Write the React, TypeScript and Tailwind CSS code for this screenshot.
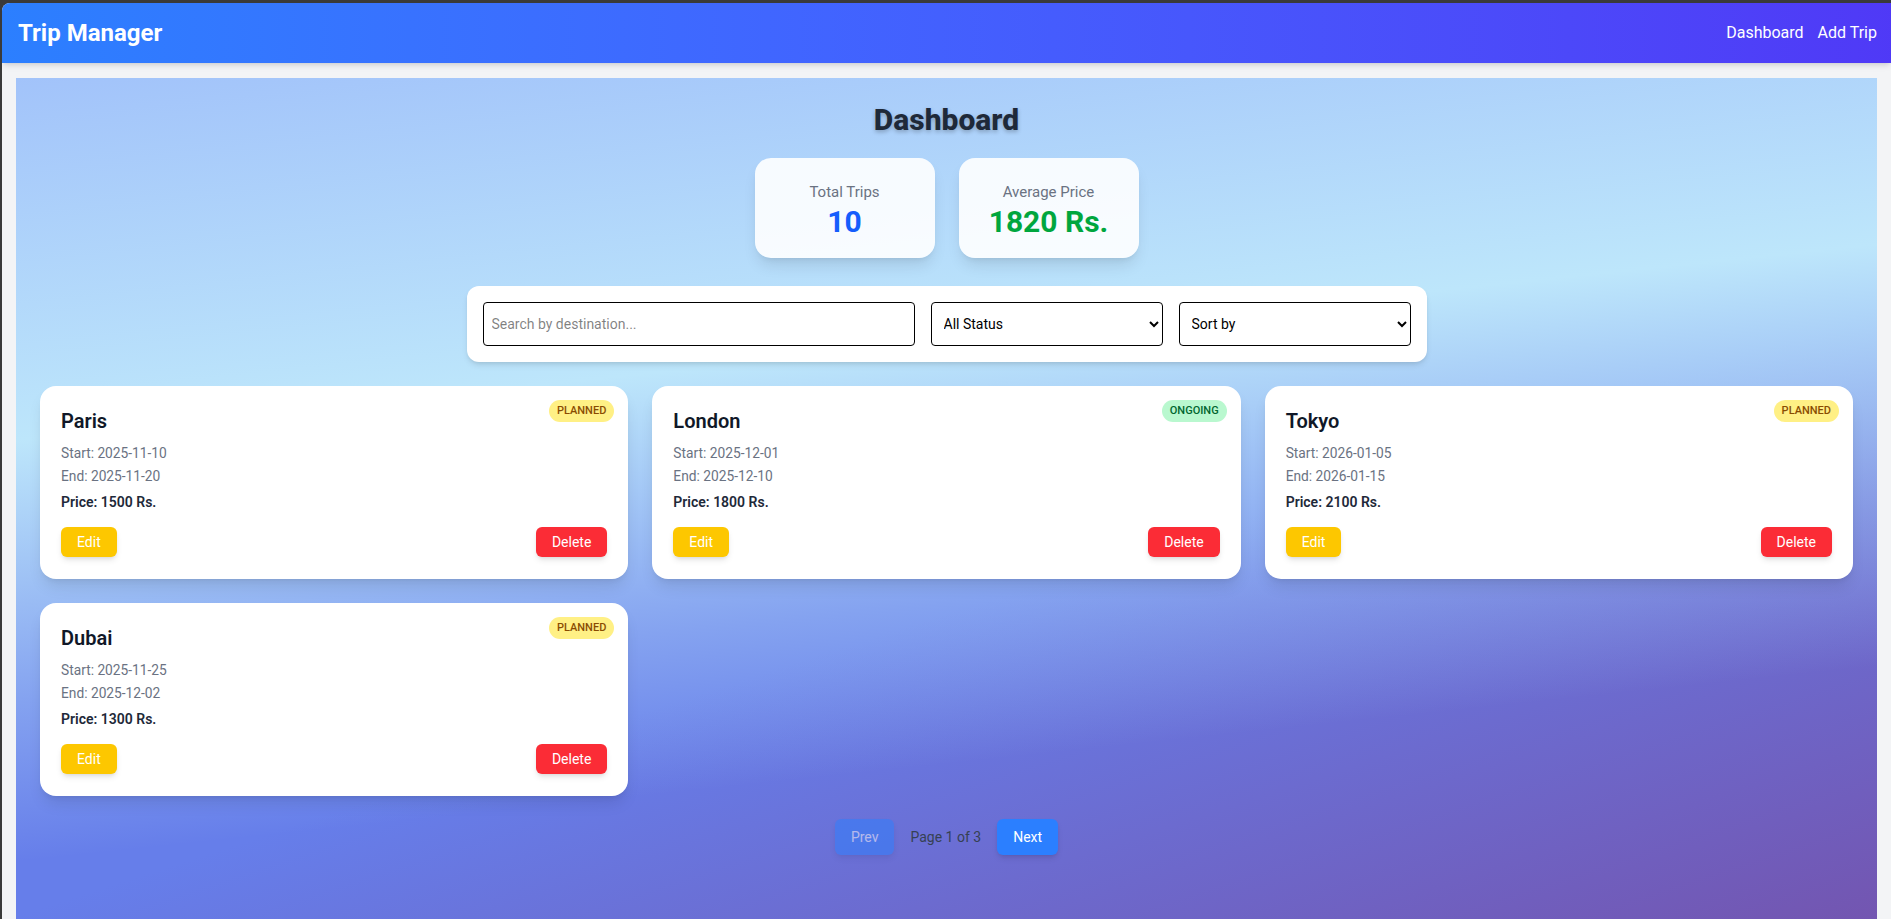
import { useState } from 'react';

type Trip = {
  id: number;
  destination: string;
  start: string;
  end: string;
  price: number;
  status: 'PLANNED' | 'ONGOING';
};

const trips: Trip[] = [
  { id: 1, destination: 'Paris', start: '2025-11-10', end: '2025-11-20', price: 1500, status: 'PLANNED' },
  { id: 2, destination: 'London', start: '2025-12-01', end: '2025-12-10', price: 1800, status: 'ONGOING' },
  { id: 3, destination: 'Tokyo', start: '2026-01-05', end: '2026-01-15', price: 2100, status: 'PLANNED' },
  { id: 4, destination: 'Dubai', start: '2025-11-25', end: '2025-12-02', price: 1300, status: 'PLANNED' },
];

function StatusBadge({ status }: { status: Trip['status'] }) {
  const color = status === 'ONGOING' ? 'bg-green-200 text-green-800' : 'bg-yellow-200 text-yellow-800';
  return (
    <span
      className={`absolute top-[14px] right-[14px] rounded-full px-2 py-[3px] text-[11px] leading-4 font-medium ${color}`}
    >
      {status}
    </span>
  );
}

function TripCard({ trip }: { trip: Trip }) {
  return (
    <div className="relative rounded-2xl bg-white px-[21px] pt-[21px] pb-[22px] shadow-lg">
      <StatusBadge status={trip.status} />
      <h3 className="text-xl leading-7 font-semibold text-gray-900">{trip.destination}</h3>
      <div className="mt-[7px] text-[13.75px] leading-[23px] text-gray-500">
        <p>Start: {trip.start}</p>
        <p>End: {trip.end}</p>
      </div>
      <p className="mt-[4px] text-sm leading-5 font-semibold text-gray-800">Price: {trip.price} Rs.</p>
      <div className="mt-[15px] flex items-center justify-between">
        <button className="rounded-md bg-yellow-400 px-4 py-[5px] text-sm text-white shadow-md">Edit</button>
        <button className="rounded-md bg-red-500 px-4 py-[5px] text-sm text-white shadow-md">Delete</button>
      </div>
    </div>
  );
}

export default function App() {
  const [search, setSearch] = useState('');

  return (
    <div className="min-h-screen bg-[#3a3a3a] pt-[3px] pl-[2px] font-['Roboto',sans-serif]">
      <div className="min-h-screen overflow-hidden rounded-tl-lg bg-gray-100">
        <nav className="relative z-10 flex h-[60px] items-center justify-between bg-linear-to-r from-blue-500 to-indigo-600 pr-[14px] pl-4 text-white shadow-md">
          <h1 className="text-2xl font-bold">Trip Manager</h1>
          <div className="flex gap-3.5 text-base">
            <a href="#">Dashboard</a>
            <a href="#">Add Trip</a>
          </div>
        </nav>

        <main className="px-3.5 pt-[15px]">
          <div className="min-h-screen bg-[linear-gradient(174deg,#a2c3fa_0px,#bde6fb_360px,rgba(189,230,251,0.35)_620px,rgba(189,230,251,0)_780px),linear-gradient(162deg,#667eea_55%,#764ba2_105%)] px-6 pt-6 pb-10">
            <h2 className="text-center text-3xl font-extrabold text-gray-800 [text-shadow:0_2px_4px_rgba(0,0,0,0.25)]">
              Dashboard
            </h2>

            <div className="mt-5 flex justify-center gap-6">
              <div className="w-[180px] rounded-2xl bg-white/90 px-5 pt-[22px] pb-[18px] text-center shadow-lg">
                <p className="text-[15px] leading-6 text-gray-500">Total Trips</p>
                <p className="text-3xl leading-9 font-bold text-blue-600">10</p>
              </div>
              <div className="w-[180px] rounded-2xl bg-white/90 px-5 pt-[22px] pb-[18px] text-center shadow-lg">
                <p className="text-[15px] leading-6 text-gray-500">Average Price</p>
                <p className="text-3xl leading-9 font-bold text-green-600">1820 Rs.</p>
              </div>
            </div>

            <div className="mx-auto mt-[28px] flex w-[960px] gap-4 rounded-xl bg-white p-4 shadow-md">
              <input
                value={search}
                onChange={(e) => setSearch(e.target.value)}
                placeholder="Search by destination..."
                className="h-11 flex-1 rounded border border-black px-2 text-sm"
              />
              <select className="h-11 w-[232px] rounded border border-black px-2 text-sm">
                <option>All Status</option>
                <option>Planned</option>
                <option>Ongoing</option>
                <option>Completed</option>
              </select>
              <select className="h-11 w-[232px] rounded border border-black px-2 text-sm">
                <option>Sort by</option>
                <option>Price</option>
                <option>Start date</option>
              </select>
            </div>

            <div className="mt-6 grid grid-cols-3 gap-6">
              {trips.map((t) => (
                <TripCard key={t.id} trip={t} />
              ))}
            </div>

            <div className="mt-[23px] flex items-center justify-center gap-4">
              <button disabled className="rounded-md bg-blue-500 px-4 py-2 text-sm text-white opacity-50 shadow-md">
                Prev
              </button>
              <span className="text-sm text-gray-700">Page 1 of 3</span>
              <button className="rounded-md bg-blue-500 px-4 py-2 text-sm text-white shadow-md">Next</button>
            </div>
          </div>
        </main>
      </div>
    </div>
  );
}
